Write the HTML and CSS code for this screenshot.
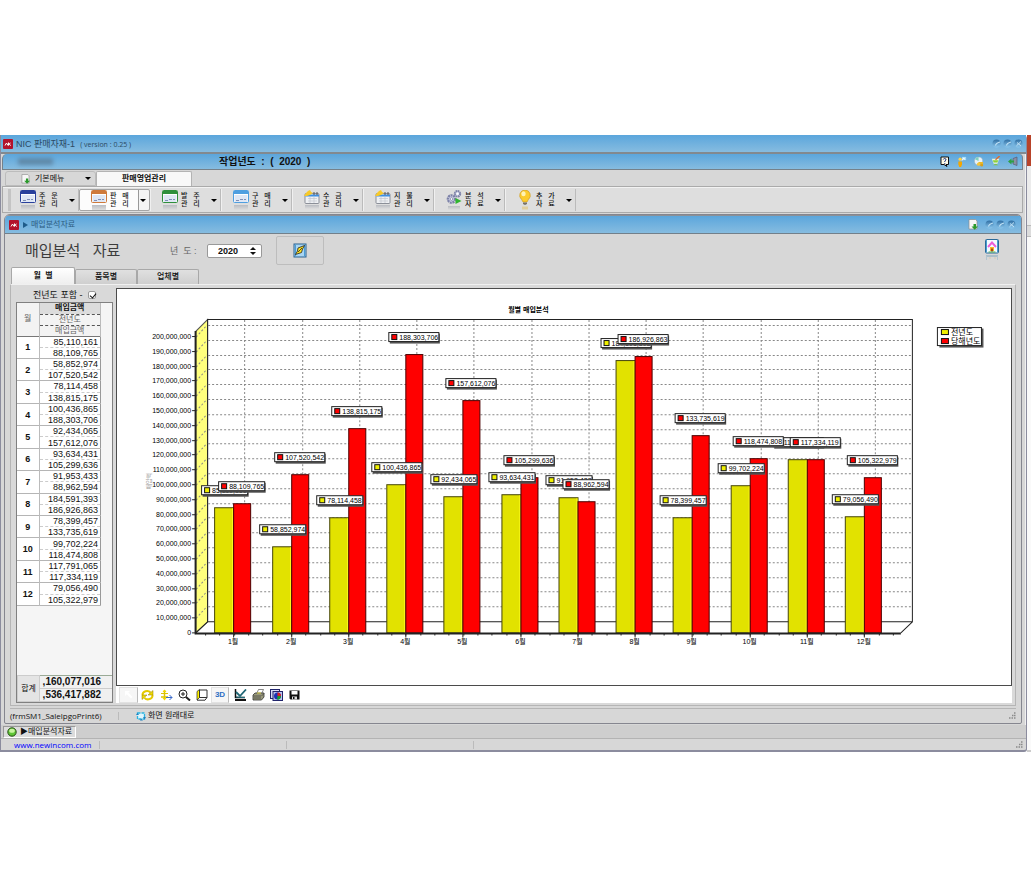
FILE: index.html
```html
<!DOCTYPE html>
<html lang="ko">
<head>
<meta charset="utf-8">
<title>NIC 판매자재-1</title>
<link rel="stylesheet" href="styles.css">
</head>
<body>
<svg class="defs" aria-hidden="true">
  <defs>
    <linearGradient id="orb" x1="0" y1="0" x2="0" y2="1"><stop offset="0" stop-color="#2f6ea3"/><stop offset="1" stop-color="#8cc8ee"/></linearGradient>
    <linearGradient id="fade" x1="0" y1="0" x2="0" y2="1"><stop offset="0" stop-color="#b9bcc2"/><stop offset="1" stop-color="#dedede"/></linearGradient>
    <symbol id="i-logo" viewBox="0 0 10 10"><rect width="10" height="10" rx="1" fill="#b3122c"/><path d="M2 6.500L3.500 4L5 6.500M5.500 3.500V6.500M5.500 5.500L7.500 4M6.200 5.200L7.800 6.500" stroke="#fff" fill="none"/></symbol>
    <symbol id="i-min" viewBox="0 0 9 9"><circle cx="4.500" cy="4.500" r="4" fill="url(#orb)"/><path d="M3.500 6.500Q4 4 8 3" stroke="#c4e4f7" stroke-width="1.200" fill="none"/></symbol>
    <symbol id="i-close" viewBox="0 0 9 9"><circle cx="4.500" cy="4.500" r="4" fill="url(#orb)"/><path d="M2.500 6.800L7 2.500M3 3.500L7 7" stroke="#c4e4f7" fill="none"/></symbol>
    <symbol id="i-page" viewBox="0 0 10 11"><path d="M1 .5H7.500L9 2V10H1Z" fill="#f6f6f6" stroke="#8c8c8c" stroke-width=".7"/><path d="M5.500 5H8V7.500H10L6.700 10.800L3.500 7.500H5.500Z" fill="#2b9a2b"/></symbol>
    <symbol id="i-win" viewBox="0 0 16 20"><rect x=".5" y=".5" width="15" height="12" rx="1" fill="#fff" stroke="currentColor"/><rect x="1" y="1" width="14" height="3" fill="currentColor"/><rect x="1.500" y="5" width="13" height="7" fill="#dfe7f5"/><path d="M3 10.500H6M7 9.500H10M11 9.500H13" stroke="#7f8fb5"/><rect x="1" y="15" width="14" height="5" fill="url(#fade)"/></symbol>
    <symbol id="i-cal" viewBox="0 0 16 20"><rect x="1" y="3.500" width="14" height="10" rx="1" fill="#eef0f3" stroke="#8b8f98"/><path d="M1.500 5.500H15" stroke="#3f8fe0" stroke-width="2"/><path d="M4 8.500H13M4 11H13M6 7V13M10 7V13" stroke="#c2c6cd" stroke-width=".7"/><path d="M0 6L2 3L4 1L6 0L7 2L9 3L6 5L3 6Z" fill="#f7c928"/><path d="M10 2V5M13 2V5" stroke="#555"/><rect x="1" y="15" width="14" height="4" fill="url(#fade)"/></symbol>
    <symbol id="i-gear" viewBox="0 0 16 20"><circle cx="5.500" cy="9" r="3.600" fill="#dcdff0" stroke="#7d82a8" stroke-width="2.400" stroke-dasharray="2 .6"/><circle cx="5.500" cy="9" r="1.400" fill="#fff" stroke="#666b95" stroke-width=".7"/><circle cx="11.500" cy="3.800" r="2.700" fill="#dcdff0" stroke="#7d82a8" stroke-width="2" stroke-dasharray="1.600 .5"/><circle cx="11.500" cy="3.800" r="1" fill="#fff"/><path d="M9.500 8L15.500 11L9.500 14Z" fill="#2fb52f"/><rect x="2" y="16" width="12" height="4" fill="url(#fade)"/></symbol>
    <symbol id="i-bulb" viewBox="0 0 16 20"><path d="M8 0A5.400 5.400 0 0 0 4.600 9.500L6 12H10L11.400 9.500A5.400 5.400 0 0 0 8 0Z" fill="#fccb2d" stroke="#c9961a" stroke-width=".6"/><ellipse cx="6.500" cy="3.800" rx="2.200" ry="2.500" fill="#fff3b5"/><path d="M6 12.500H10V14L8 15L6 14Z" fill="#77736a"/><rect x="5" y="16.500" width="6" height="3" fill="#e0cfa0"/></symbol>
    <symbol id="i-help" viewBox="0 0 10 11"><path d="M1 1H8.500V8.500H6L7 10.500L4 8.500H1Z" fill="#fffbe6" stroke="#111"/><path d="M3.300 3.500Q3.500 2.500 4.800 2.500Q6.300 2.600 6 4L4.800 5V6M4.800 7V8" stroke="#223a8c" fill="none"/></symbol>
    <symbol id="i-man" viewBox="0 0 10 12"><circle cx="3" cy="3.500" r="1.800" fill="#ffd34d"/><path d="M1 6H5V9L4 12H2L1 9Z" fill="#f5a700"/><path d="M5 1H9.500V4.500H5Z" fill="#a5dbf8"/><path d="M5 5L7 2L8 4" stroke="#fff" fill="none"/></symbol>
    <symbol id="i-disc" viewBox="0 0 11 12"><circle cx="5" cy="5.500" r="4.500" fill="#e7f1f7" stroke="#9ab" stroke-width=".5"/><path d="M5 5.500L1 3.500A4.500 4.500 0 0 1 5 1Z" fill="#7fd0c0"/><path d="M5 6.500H10V9L9 10H5Z" fill="#e8b92c"/><circle cx="5" cy="9" r="1.800" fill="#f3c53c"/><circle cx="8.500" cy="10" r="1.500" fill="#d89f1b"/></symbol>
    <symbol id="i-cup" viewBox="0 0 10 12"><path d="M.5 3H8.500L6.500 8.500H2.500Z" fill="#e9f7df"/><path d="M1.500 4.500H7.500L6.500 7H2.500Z" fill="#8ed03b"/><path d="M4.500 4L9 0" stroke="#e06b2d" stroke-width="1.500"/><path d="M2 10Q4.500 7.500 7.500 10Z" fill="#7cc242"/></symbol>
    <symbol id="i-exit" viewBox="0 0 10 11"><path d="M5 2.500L9 1V9.500L5 8Z" fill="#8a8fa3" stroke="#555b75" stroke-width=".7"/><path d="M0 5.500L3.500 2.500V4.500H6V6.500H3.500V8.500Z" fill="#2f9f43"/></symbol>
    <symbol id="i-bolt" viewBox="0 0 14 15"><rect x="1" y="1" width="12" height="13" fill="#a9d6f3" stroke="#2b6391"/><path d="M2.500 1.500V13.500M11.500 1.500V13.500" stroke="#4a9cd6"/><path d="M11.500 2.500L5 5L4.500 8L2.500 11.500L8.500 9.500L9.500 6Z" fill="#ffe21f" stroke="#222" stroke-width=".8"/><path d="M5 9L9 5" stroke="#222" stroke-width=".8"/></symbol>
    <symbol id="i-home" viewBox="0 0 14 24"><rect x=".5" y=".5" width="13" height="13.500" rx="1" fill="#f5fbff" stroke="#2b6a99"/><path d="M1.500 1V13.500M12.500 1V13.500" stroke="#4a9cd0"/><path d="M3 8L7 3.500L11 8" stroke="#ed5fd8" stroke-width="2" fill="none"/><path d="M5 8H9V12H5Z" fill="#ffb423"/><rect x="6" y="9.500" width="2" height="3" fill="#a6471c"/><path d="M3.500 13H10.500" stroke="#4caf50"/><path d="M1 17H13" stroke="#8fb0c2" stroke-width="1.200"/><path d="M1.500 17V21M12.500 17V21" stroke="#b2c6d0"/><path d="M4 19H6M9 19H11" stroke="#d8c9b0"/></symbol>
    <symbol id="i-rotate" viewBox="0 0 13 12"><path d="M1.500 6A4.500 4 0 0 1 9.500 3.500M11.500 6A4.500 4 0 0 1 3.500 8.800" stroke="#e5ca00" stroke-width="2" fill="none"/><path d="M12 1.500V6H7ZM1 10.500V6H6Z" fill="#f2dc00" stroke="#8c7a00" stroke-width=".5"/></symbol>
    <symbol id="i-move" viewBox="0 0 13 12"><path d="M4.500 1V10M1 8H8" stroke="#dcc300" stroke-width="1.500"/><path d="M2.500 3L4.500 .5L6.500 3ZM2.500 9L4.500 11.500L6.500 9Z" fill="#f0d800"/><path d="M1 4.500H8" stroke="#dcc300"/><path d="M6 8.500H12M9.500 6L12 8.500L9.500 11" stroke="#3869c9" fill="none"/></symbol>
    <symbol id="i-zoom" viewBox="0 0 13 12"><circle cx="5" cy="5" r="4" fill="#fff" stroke="#222"/><path d="M3 5H7M5 3V7" stroke="#222"/><path d="M8 8L12 11.500" stroke="#222" stroke-width="2"/></symbol>
    <symbol id="i-depth" viewBox="0 0 13 12"><path d="M1 2.500L3.500 .5V8.500L1 11Z" fill="#fff200" stroke="#222" stroke-width=".7"/><path d="M3.500 1H11V8.500H3.500ZM1 11.200H9L11 8.500" stroke="#333" fill="none"/></symbol>
    <symbol id="i-edit" viewBox="0 0 13 12"><path d="M1.500 0V8.500H11" stroke="#111" stroke-width="1.500" fill="none"/><path d="M2 3L6 7L12 .5" stroke="#1f6675" stroke-width="1.800" fill="none"/><path d="M2 8L11 8.500" stroke="#267a8a"/><path d="M1 11H12" stroke="#111" stroke-width="2"/></symbol>
    <symbol id="i-print" viewBox="0 0 13 12"><path d="M4.500 5L6.500 .5H11.500L9.500 5Z" fill="#fff" stroke="#555" stroke-width=".7"/><path d="M1 6L3 4H12V8L9.500 11H1Z" fill="#9a9a7c" stroke="#333" stroke-width=".8"/><path d="M1.500 7H9M2 9H9M9.500 7L12 4.500" stroke="#444" stroke-width=".8"/><path d="M5 4H9" stroke="#e4d84a"/></symbol>
    <symbol id="i-copy" viewBox="0 0 13 12"><rect x=".5" y=".5" width="9" height="9" fill="#d7dcf5" stroke="#20246b"/><rect x="3" y="2.500" width="9.500" height="9" fill="#bcc6ef" stroke="#20246b"/><circle cx="7.500" cy="7" r="3.500" fill="#1831b8"/><path d="M7.500 7V3.500A3.500 3.500 0 0 1 11 7Z" fill="#e02020"/><path d="M7.500 7H11A3.500 3.500 0 0 1 7 10.500Z" fill="#17a02c"/></symbol>
    <symbol id="i-save" viewBox="0 0 13 12"><path d="M1.500 1.500H11.500V10.500H2.500L1.500 9.500Z" fill="#111"/><rect x="3.500" y="2" width="6" height="3.500" fill="#fff"/><rect x="4" y="7.500" width="5" height="3" fill="#ddd"/><rect x="5" y="8" width="1.500" height="2" fill="#111"/></symbol>
    <symbol id="i-arrow" viewBox="0 0 13 12"><path d="M3 2H8L6.300 3.500L10.500 8L9 9.500L4.800 5.200L3 7Z" fill="#fff"/></symbol>
    <symbol id="i-restore" viewBox="0 0 10 10"><rect x="1.500" y="2" width="7" height="6" fill="#dff5fd" stroke="#2bb3e0" stroke-width="1.300" stroke-dasharray="3 1"/><path d="M0 4L1.500 2L3 4ZM7 6L8.500 8.500L10 6Z" fill="#1d7fc0"/><path d="M5 7.500L7 9.500H4Z" fill="#1d7fc0"/></symbol>
    <symbol id="i-green" viewBox="0 0 10 10"><circle cx="5" cy="5" r="4.200" fill="#5fc636" stroke="#274d16"/><ellipse cx="5" cy="3.800" rx="2.800" ry="2" fill="#c8f5a0"/></symbol>
    <symbol id="i-grip" viewBox="0 0 8 8"><path d="M6 1H7.500M4 3.500H5.500M6 3.500H7.500M1 6H2.500M3.500 6H5M6 6H7.500" stroke="#8a8a8a" stroke-width="1.300"/></symbol>
  </defs>
</svg>

<div class="desktop">
  <main class="app">
    <header class="bar bar-main">
      <svg class="ic10"><use href="#i-logo"/></svg>
      <span class="cap">NIC 판매자재-1 &nbsp;<small>( version : 0.25 )</small></span>
      <span class="orbs">
        <button aria-label="최소화"><svg><use href="#i-min"/></svg></button>
        <button aria-label="최대화"><svg><use href="#i-min"/></svg></button>
        <button aria-label="닫기"><svg><use href="#i-close"/></svg></button>
      </span>
    </header>

    <div class="frame">
      <div class="bar bar-sub">
        <span class="masked"></span>
        <strong class="year">작업년도  :  (  2020  )</strong>
        <span class="quick">
          <button aria-label="도움말"><svg><use href="#i-help"/></svg></button>
          <button aria-label="사용자"><svg><use href="#i-man"/></svg></button>
          <button aria-label="디스크"><svg><use href="#i-disc"/></svg></button>
          <button aria-label="휴식"><svg><use href="#i-cup"/></svg></button>
          <button aria-label="종료"><svg><use href="#i-exit"/></svg></button>
        </span>
      </div>

      <nav class="menu">
        <button class="menu-base"><svg><use href="#i-page"/></svg><span>기본메뉴</span><i class="caret"></i></button>
        <button class="menu-on">판매영업관리</button>
      </nav>

      <div class="tools">
        <button class="tool"><svg class="navy"><use href="#i-win"/></svg><span>주   문<br>관   리</span><i class="caret"></i></button>
        <button class="tool on"><svg class="orange"><use href="#i-win"/></svg><span>판   매<br>관   리</span><i class="caret"></i></button>
        <button class="tool"><svg class="green"><use href="#i-win"/></svg><span>발   주<br>관   리</span><i class="caret"></i></button>
        <button class="tool"><svg class="sky"><use href="#i-win"/></svg><span>구   매<br>관   리</span><i class="caret"></i></button>
        <button class="tool"><svg><use href="#i-cal"/></svg><span>수   금<br>관   리</span><i class="caret"></i></button>
        <button class="tool"><svg><use href="#i-cal"/></svg><span>지   불<br>관   리</span><i class="caret"></i></button>
        <button class="tool"><svg><use href="#i-gear"/></svg><span>분   석<br>자   료</span><i class="caret"></i></button>
        <button class="tool"><svg><use href="#i-bulb"/></svg><span>추   가<br>자   료</span><i class="caret"></i></button>
      </div>

      <section class="child">
        <header class="bar bar-child">
          <svg class="ic10"><use href="#i-logo"/></svg>
          <i class="play"></i>
          <span class="cap">매입분석자료</span>
          <span class="orbs">
            <button class="wide" aria-label="내보내기"><svg><use href="#i-page"/></svg></button>
            <button aria-label="최소화"><svg><use href="#i-min"/></svg></button>
            <button aria-label="최대화"><svg><use href="#i-min"/></svg></button>
            <button aria-label="닫기"><svg><use href="#i-close"/></svg></button>
          </span>
        </header>

        <div class="head">
          <h1>매입분석   자료</h1>
          <label for="year">년  도 :</label>
          <span class="spin">
            <input id="year" value="2020">
            <span class="arrows"><button class="up" aria-label="증가"></button><button class="down" aria-label="감소"></button></span>
          </span>
          <button class="run" aria-label="조회"><svg><use href="#i-bolt"/></svg></button>
          <button class="home" aria-label="홈"><svg><use href="#i-home"/></svg></button>
        </div>

        <div class="tabs" role="tablist">
          <button role="tab" aria-selected="true">월  별</button>
          <button role="tab" aria-selected="false">품목별</button>
          <button role="tab" aria-selected="false">업체별</button>
        </div>

        <div class="page">
          <aside class="side">
            <label class="prev">전년도 포함 - <input type="checkbox" checked></label>
            <div class="list">
              <table class="months">
                <thead>
                  <tr><th rowspan="3">월</th><th class="h1">매입금액</th></tr>
                  <tr><th>전년도</th></tr>
                  <tr><th>매입금액</th></tr>
                </thead>
                <tbody id="rows"></tbody>
              </table>
              <table class="sum">
                <tbody>
                  <tr><th rowspan="2">합계</th><td>,160,077,016</td></tr>
                  <tr><td>,536,417,882</td></tr>
                </tbody>
              </table>
            </div>
          </aside>
          <div class="graph">
            <svg id="chart" viewBox="117 289 893 396" role="img" aria-label="월별 매입분석"></svg>
            <div class="chart-tools">
              <button class="flat" aria-label="선택"><svg><use href="#i-arrow"/></svg></button>
              <button aria-label="회전"><svg><use href="#i-rotate"/></svg></button>
              <button aria-label="이동"><svg><use href="#i-move"/></svg></button>
              <button aria-label="확대"><svg><use href="#i-zoom"/></svg></button>
              <button aria-label="깊이"><svg><use href="#i-depth"/></svg></button>
              <button class="flat td">3D</button>
              <button aria-label="편집"><svg><use href="#i-edit"/></svg></button>
              <button aria-label="인쇄"><svg><use href="#i-print"/></svg></button>
              <button aria-label="복사"><svg><use href="#i-copy"/></svg></button>
              <button aria-label="저장"><svg><use href="#i-save"/></svg></button>
            </div>
          </div>
        </div>

        <footer class="status">
          <span class="form">(frmSM1_SalelpgoPrint6)</span>
          <button class="restore"><svg><use href="#i-restore"/></svg>화면 원래대로</button>
          <svg class="grip"><use href="#i-grip"/></svg>
        </footer>
      </section>
    </div>

    <div class="tasks"><button><svg><use href="#i-green"/></svg>▶매입분석자료</button></div>
    <footer class="foot">
      <a href="#">www.newincom.com</a><i class="cell"></i><i class="cell"></i>
      <svg class="grip"><use href="#i-grip"/></svg>
    </footer>
  </main>
  <div class="behind"><i class="b-red"></i><i class="b-gray"></i><i class="b-line"></i></div>
</div>
<script src="app.js"></script>
</body>
</html>
```
FILE: styles.css
```css
* { box-sizing: border-box; }
body {
  margin: 0;
  background: #fff;
  font: 8px/10px "Liberation Sans", "Noto Sans CJK KR", sans-serif;
  color: #111;
}
button {
  margin: 0; padding: 0; border: 0; background: none;
  font: inherit; color: inherit;
  display: flex; align-items: center;
}
svg { display: block; flex: none; }
.defs { position: absolute; width: 0; height: 0; }

.desktop { display: flex; padding-top: 135px; }
.app {
  flex: 1; min-width: 0;
  background: #d7d7d7;
  border: solid #8b8c9e;
  border-width: 0 1px 2px 1px;
  border-radius: 0 4px 3px 0;
}
.behind { width: 4px; display: flex; flex-direction: column; background: #fafafa; border-bottom: 2px solid #ccc; }
.b-red { height: 31px; background: #b8432a; }
.b-gray { height: 59px; background: #ececec; }
.b-line { height: 12px; background: #dcdcdc; border-top: 1px solid #bbb; border-bottom: 1px solid #bbb; }

.bar { display: flex; align-items: center; background: linear-gradient(#5ba6dc, #86bce0); }
.bar-main { height: 19px; padding: 0 3px 0 2px; border-bottom: 2px solid #82898f; }
.ic10 { width: 10px; height: 10px; }
.cap { margin-left: 3px; font-size: 9px; color: #2d4a63; white-space: pre; }
.cap small { font: 7px "Open Sans", sans-serif; }
.orbs { display: flex; gap: 2px; margin-left: auto; align-items: center; }
.orbs svg { width: 9px; height: 9px; }
.orbs .wide { margin-right: 5px; }
.orbs .wide svg { width: 10px; height: 11px; }

.frame { padding: 0 2px 1px 1px; border-right: 1px solid #f0f0f0; }
.bar-sub { height: 16px; padding: 0 4px 0 15px; border: solid #75818a; border-width: 0 1px 1px; border-radius: 5px 4px 0 0; }
.masked { width: 35px; height: 7px; background: #5b7f9b; filter: blur(2px); opacity: .8; }
.year { margin-left: 166px; font-size: 10px; white-space: pre; }
.quick { display: flex; gap: 7px; margin-left: auto; }
.quick svg { width: 10px; height: 11px; }

.menu { display: flex; height: 16px; padding: 1px 0 0 3px; font-weight: bold; }
.menu-base { width: 91px; padding: 0 4px 0 15px; border: 1px solid #bcbcbc; border-radius: 3px 3px 0 0; font-weight: normal; }
.menu-base svg { width: 9px; height: 10px; }
.menu-base span { margin-left: 5px; }
.menu-on { width: 96px; justify-content: center; background: #f8f8f8; border: 1px solid #b3b3b3; border-bottom: 0; border-radius: 2px 2px 0 0; }
.caret { width: 0; height: 0; margin-left: auto; border: 3px solid transparent; border-top-color: #000; border-bottom: 0; }

.tools { display: flex; height: 27px; padding: 2px 0 1px 5px; border: 1px solid #aaa; box-shadow: inset 0 1px #f2f2f2; background: #dedede; }
.tool { width: 71px; height: 22px; padding: 0 3px 0 11px; border-right: 1px solid #bbb; border-left: 1px solid #f0f0f0; font-size: 7px; line-height: 8px; text-align: left; white-space: pre; }
.tool svg { width: 16px; height: 20px; }
.tool span { margin-left: 3px; font-weight: 500; }
.tool.on { background: linear-gradient(90deg, #fcfcfc 58px, #999 58px, #999 59px, #f4f4f4 59px); border: 1px solid #a5a5a5; border-radius: 2px; }
.tool:first-child { border-left: 3px solid #c4c4c4; padding-left: 9px; }
.navy { color: #28409c; } .orange { color: #cf7a3c; } .green { color: #2e8f3c; } .sky { color: #4f9fe0; }

.child { margin: 1px 1px 0 2px; border: 1px solid #85868f; border-radius: 6px 5px 2px 2px; background: #d7d7d7; overflow: hidden; }
.bar-child { height: 19px; padding: 0 5px 0 4px; border-top: 1px solid #8b9096; border-bottom: 1px solid #72808b; }
.bar-child .cap { font-size: 8px; color: #2d5c80; }
.play { width: 0; height: 0; margin-left: 4px; border: 3px solid transparent; border-left: 5px solid #1f5c8a; border-right: 0; }

.head { display: flex; align-items: center; height: 33px; padding: 0 22px 0 20px; color: #666; }
.head h1 { width: 145px; margin: 0; font-size: 15px; line-height: 20px; font-weight: normal; color: #3c3c3c; white-space: pre; }
.head label { width: 37px; white-space: pre; font-size: 9px; }
.spin { display: flex; width: 55px; height: 14px; background: #fff; border: 1px solid #999; border-radius: 2px; }
.spin input { width: 42px; padding: 0 0 0 10px; border: 0; background: none; font: bold 9px/12px "Liberation Sans", sans-serif; color: #111; }
.arrows { display: flex; flex-direction: column; justify-content: center; gap: 2px; }
.arrows button { width: 0; height: 0; border: 3px solid transparent; }
.arrows .up { border-bottom-color: #111; border-top: 0; }
.arrows .down { border-top-color: #111; border-bottom: 0; }
.run { width: 48px; height: 29px; margin: 0 auto 0 14px; justify-content: center; border: 1px solid #bdbdbd; border-radius: 2px; }
.run svg { width: 14px; height: 15px; }
.home svg { width: 14px; height: 24px; }

.tabs { display: flex; height: 17px; padding-left: 6px; align-items: flex-end; font-weight: bold; white-space: pre; }
.tabs button { width: 62px; height: 15px; justify-content: center; border: 1px solid #a8a8a8; border-bottom: 0; border-radius: 2px 2px 0 0; background: linear-gradient(#e0e0e0, #cfcfcf); font-weight: 500; }
.tabs [aria-selected="true"] { width: 64px; height: 17px; background: linear-gradient(#fff, #eee); font-weight: bold; }

.page { display: flex; margin: 0 5px; padding: 3px 3px 2px 5px; border: 1px solid #b5b5b5; border-top-color: #f0f0f0; gap: 3px; background: #d9d9d9; }
.side { display: flex; flex-direction: column; width: 97px; flex: none; }
.prev { display: flex; align-items: center; justify-content: center; height: 14px; gap: 3px; font-size: 9px; white-space: pre; }
.prev input { appearance: none; width: 8px; height: 8px; margin: 0; border: 1px solid #999; border-radius: 2px; background: #fff; }
.prev input:checked::after { content: ""; display: block; width: 3px; height: 5px; margin: 0 0 0 2px; border: solid #111; border-width: 0 1px 1px 0; transform: rotate(40deg); }
.list { flex: 1; display: flex; flex-direction: column; justify-content: space-between; border: 1px solid #808080; background: #f5f5f5; }
table { border-collapse: collapse; table-layout: fixed; }
.months { width: 84px; height: 303px; font-size: 9px; line-height: 10px; border-right: 1px solid #999; border-bottom: 1px solid #888; }
.months th, .months td { padding: 0; height: 11px; }
.months th { width: 22px; text-align: center; font-weight: normal; font-size: 8px; color: #666; border-right: 1px solid #bbb; }
.months thead { border-bottom: 1px solid #777; background: #f3f3f3; }
.months thead th + th, .months thead tr + tr th { width: auto; border-bottom: 1px dashed #555; }
.months thead .h1 { font-weight: bold; color: #111; background: #dcdcdc; }
.months tbody { background: #fff; }
.months tbody th { font-weight: bold; font-size: 9px; color: #111; }
.months td { padding-right: 2px; text-align: right; }
.months tbody tr:nth-child(even) { border-bottom: 1px solid #b5b5b5; }
.months tbody tr:nth-child(odd) td { border-bottom: 1px dashed #ccc; }
.sum { width: 95px; border-top: 1px solid #9aaa96; background: #f0f0f0; }
.sum th { width: 22px; padding: 0; border: 1px solid #ccc; background: #e4e4e4; font-weight: normal; }
.sum td { height: 13px; padding: 0 11px 0 0; border-bottom: 1px solid #ccc; font: bold 10px/12px "Liberation Sans", sans-serif; text-align: right; }

.graph { flex: 1; min-width: 0; background: #fff; }
#chart { width: 100%; height: auto; border: 1px solid #4b4b4b; background: #fff; font-family: "Liberation Sans", "Noto Sans CJK KR", sans-serif; font-size: 7px; }
.t-mid { text-anchor: middle; }
.t-end { text-anchor: end; }
.t-title { font-weight: bold; text-anchor: middle; }
.t-axis { fill: #999; text-anchor: middle; font-size: 6px; }
.t-key { font-size: 8px; }
.grid { stroke: #888; stroke-dasharray: 2 2; fill: none; }
.edge { stroke: #222; fill: none; }
.wall { fill: #ffff7d; stroke: #555; }
.bar-y { fill: #e2e200; stroke: #45450a; }
.bar-r { fill: #f00; stroke: #4a0000; }
.shine { stroke: #ffff20; }
.mark { fill: #fff; stroke: #222; }
.mark-shade { fill: #555; }
.key-y { fill: #f0f000; stroke: #111; }
.key-r { fill: #f00; stroke: #111; }
.chart-tools { display: flex; align-items: center; height: 17px; padding-left: 3px; }
.chart-tools button { width: 19px; height: 16px; justify-content: center; }
.chart-tools button:nth-child(n+3) { width: 18px; }
.chart-tools svg { width: 13px; height: 12px; }
.chart-tools .flat { border: 1px solid #e2e2e2; background: #f6f6f6; border-right-color: #bbb; }
.chart-tools .td { margin-right: 2px; font-weight: bold; color: #2d6fc4; }

.status { display: flex; align-items: center; height: 15px; margin: 2px 5px 0; border-top: 1px solid #b5b5b5; white-space: nowrap; }
.form { width: 109px; border-right: 1px solid #bbb; font: 8px/8px "Open Sans", sans-serif; }
.restore { margin-left: 17px; gap: 2px; }
.restore svg { width: 10px; height: 10px; }
.grip { width: 8px; height: 8px; margin-left: auto; }

.tasks { height: 14px; padding: 1px 2px 0; background: #cecece; border-bottom: 1px solid #b3b3b3; }
.tasks button { height: 12px; padding: 0 3px; gap: 3px; border: 1px solid #999; border-right-color: #fff; border-bottom-color: #fff; background: #dcdcdc; }
.tasks svg { width: 10px; height: 10px; }
.foot { display: flex; align-items: center; height: 11px; padding: 0 3px 0 13px; }
.foot a { width: 86px; border-right: 1px solid #bbb; font: 8px/8px "Open Sans", sans-serif; color: #00f; text-decoration: none; }
.cell { width: 187px; height: 8px; border-right: 1px solid #bbb; }
```
FILE: app.js
```js
const previous = [85110161, 58852974, 78114458, 100436865, 92434065, 93634431, 91953433, 184591393, 78399457, 99702224, 117791065, 79056490];
const current = [88109765, 107520542, 138815175, 188303706, 157612076, 105299636, 88962594, 186926863, 133735619, 118474808, 117334119, 105322979];
const fmt = n => n.toLocaleString('en-US');

document.getElementById('rows').innerHTML = previous.map((p, i) =>
  `<tr><th rowspan="2">${i + 1}</th><td>${fmt(p)}</td></tr><tr><td>${fmt(current[i])}</td></tr>`).join('');

const base = 633, unit = 14.8, left = 195, right = 900, depth = 12, step = 57.25;
const y = v => Math.round(base - v / 1e7 * unit);
const mid = i => Math.round(233.3 + step * i);
const rect = (c, x, top, w, h) => `<rect class="${c}" x="${x + .5}" y="${top + .5}" width="${w}" height="${h}"/>`;
const line = (c, x1, y1, x2, y2) => `<path class="${c}" d="M${x1} ${y1}L${x2} ${y2}"/>`;
let out = '';

// walls and grid
out += `<path class="wall" d="M195.5 ${base}V331.5L207.500 319.500V621.500Z"/>`;
out += `<path class="edge" d="M207.500 319.500H911.500V621.500H207.500ZM195.500 632.500L207.500 621.500M900 632.500L911.500 621.500"/>`;
for (let k = 0; k <= 20; k++) {
  const t = y(k * 1e7);
  if (k) {
    out += line('grid', left + 13, t - depth + .5, right + depth, t - depth + .5);
    out += line('grid', left + 1, t, left + 12, t - depth);
  }
  out += line('edge', left - 3, t - .5, left, t - .5);
  out += `<text class="t-end" x="191" y="${t + 2}">${fmt(k * 1e7)}</text>`;
}
for (let i = 0; i < 12; i++) {
  const x = mid(i) + depth - .5;
  out += line('grid', x, 320, x, 621);
  out += line('edge', mid(i) + .5, base, mid(i) + .5, base + 4);
  out += `<text class="t-mid" x="${mid(i)}" y="644">${i + 1}월</text>`;
}
for (let x = left + 10; x < right; x += step / 4) out += line('edge', Math.round(x) + .5, base, Math.round(x) + .5, base + 2);

// bars
previous.forEach((v, i) => {
  out += rect('bar-y', mid(i) - 19, y(v), 19, base - y(v) - 1);
  out += line('shine', mid(i) - .5, y(v) + 1, mid(i) - .5, base - 1);
});
current.forEach((v, i) => { out += rect('bar-r', mid(i), y(v), 17, base - y(v) - 1); });
out += `<path class="edge" stroke-width="2" d="M195.500 331V633H900"/>`;

// value marks
const mark = (v, cx, key) => {
  const w = v >= 1e8 ? 50 : 46, x = Math.round(cx - w / 2), t = y(v) - 22;
  return rect('mark-shade', x + 1, t + 1, w, 10) + rect('mark', x, t, w, 9) + rect(key, x + 3, t + 2, 5, 5) +
    `<text x="${x + 11}" y="${t + 8}">${fmt(v)}</text>`;
};
previous.forEach((v, i) => { out += mark(v, mid(i) - 9, 'key-y'); });
current.forEach((v, i) => { out += mark(v, mid(i) + 8, 'key-r'); });

// titles and legend
out += `<text class="t-title" x="528" y="312">월별 매입분석</text>`;
out += `<text class="t-axis" transform="translate(151 481) rotate(-90)">매입액</text>`;
out += rect('mark-shade', 938, 328, 44, 19) + rect('mark', 936, 327, 44, 18);
out += rect('key-y', 940, 329, 7, 5) + `<text class="t-key" x="950" y="335">전년도</text>`;
out += rect('key-r', 940, 338, 7, 5) + `<text class="t-key" x="950" y="344">당해년도</text>`;

document.getElementById('chart').innerHTML = out;
```
